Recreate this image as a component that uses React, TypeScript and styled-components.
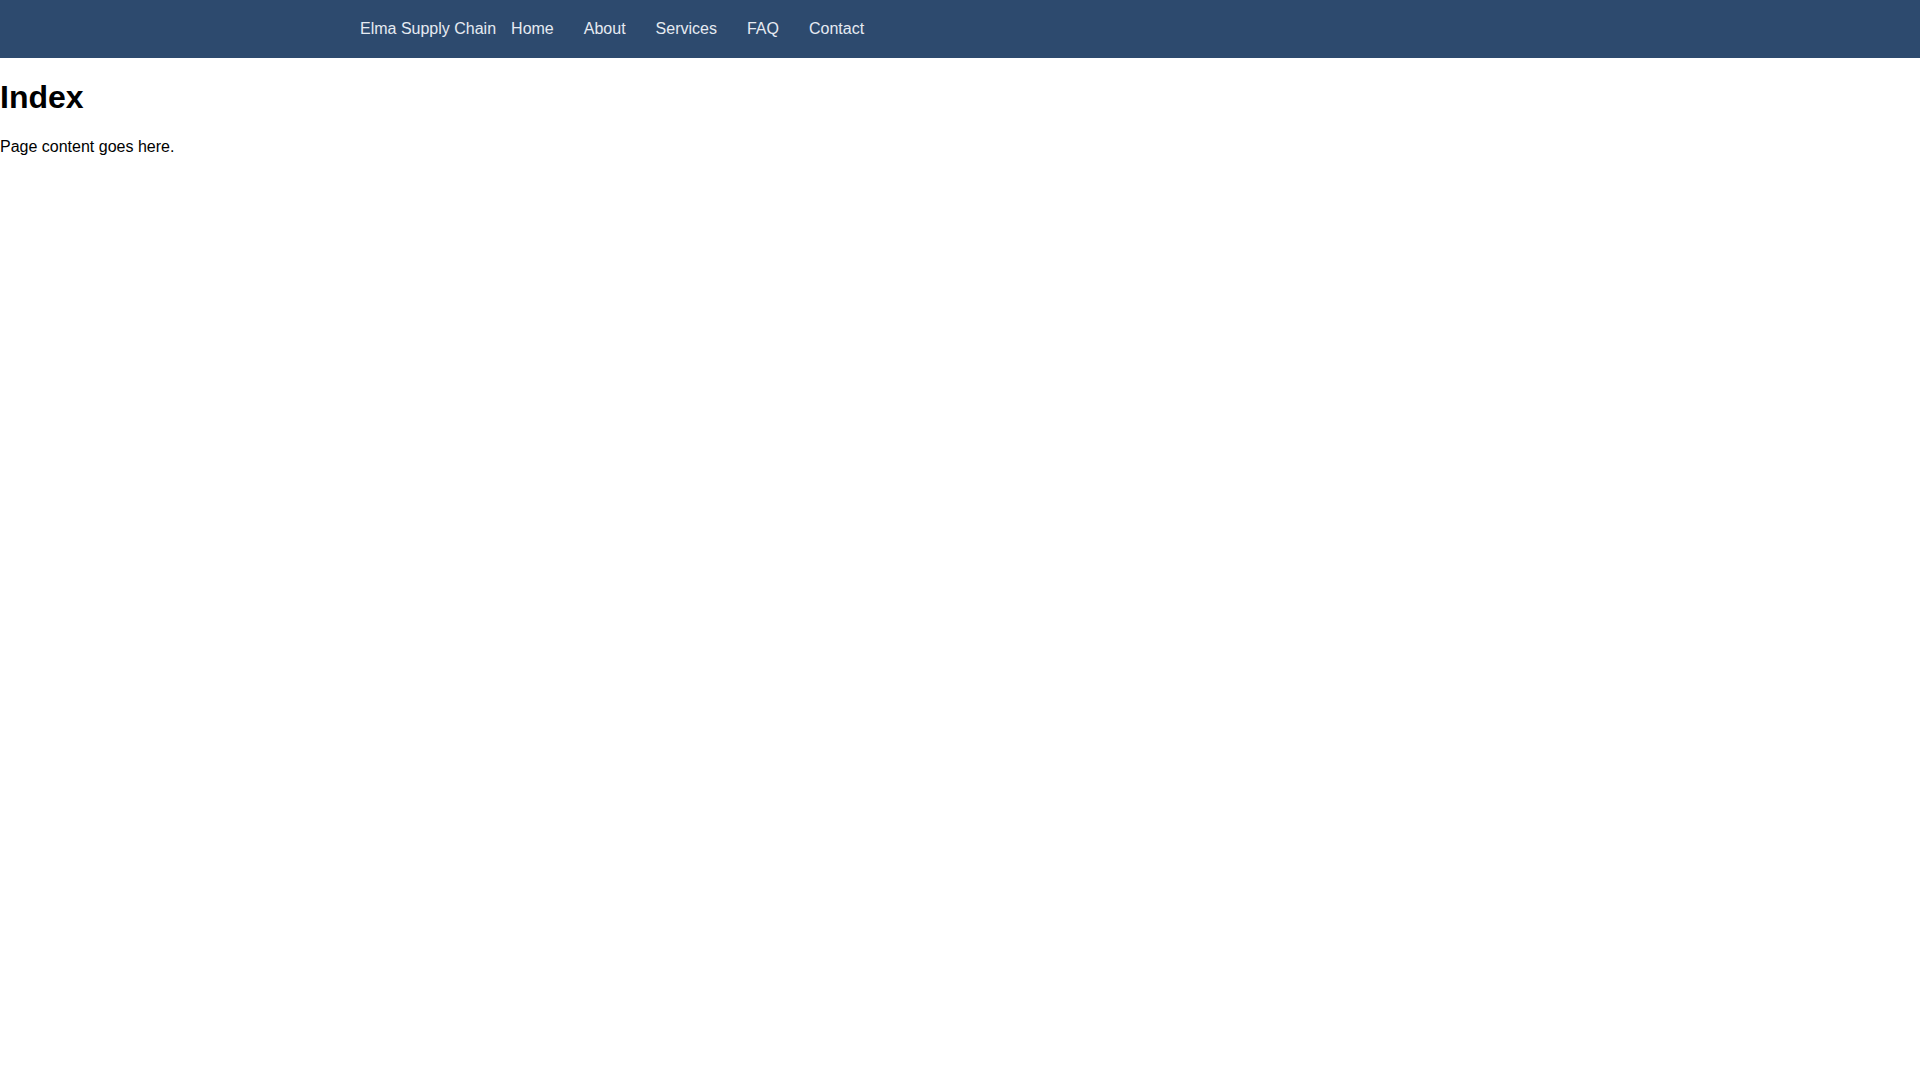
import React from 'react';
import { createGlobalStyle, styled } from 'styled-components';

const links = ['Home', 'About', 'Services', 'FAQ', 'Contact'];

const App = () => {
  return (
    <>
      <GlobalStyle />
      <NavBar>
        <NavInner>
          <Brand href="#">Elma Supply Chain</Brand>
          <NavList>
            {links.map((label) => (
              <li key={label}>
                <NavLink href="#">{label}</NavLink>
              </li>
            ))}
          </NavList>
        </NavInner>
      </NavBar>
      <main>
        <Title>Index</Title>
        <Body>Page content goes here.</Body>
      </main>
    </>
  );
};

const GlobalStyle = createGlobalStyle`
  body {
    margin: 0;
    background: #ffffff;
    color: #000000;
    font-family: "Liberation Sans", Arial, sans-serif;
    font-size: 16px;
  }
`;

const NavBar = styled.nav`
  background: #2d4a6e;
  padding: 1.25rem 0;
`;

const NavInner = styled.div`
  max-width: 1200px;
  margin: 0 auto;
  display: flex;
  align-items: center;
`;

const Brand = styled.a`
  color: #e6ebf2;
  text-decoration: none;
`;

const NavList = styled.ul`
  display: flex;
  list-style: none;
  margin: 0;
  padding: 0;
`;

const NavLink = styled.a`
  color: #e6ebf2;
  text-decoration: none;
  padding: 0 15px;
`;

const Title = styled.h1`
  font-size: 2em;
  margin: 0.67em 0;
`;

const Body = styled.p`
  margin: 1em 0;
`;

export default App;
